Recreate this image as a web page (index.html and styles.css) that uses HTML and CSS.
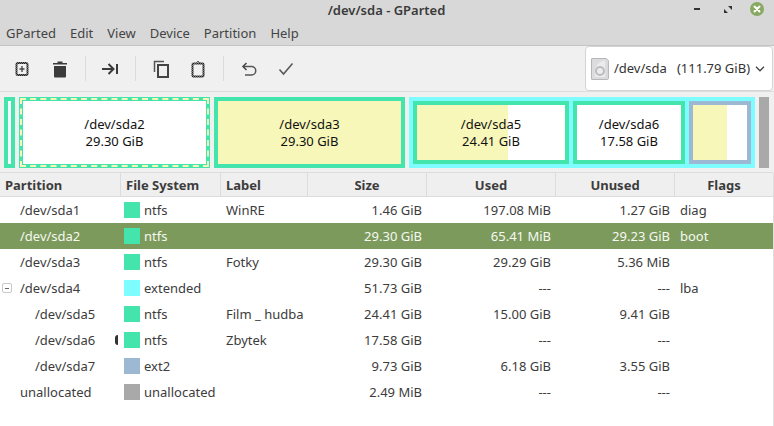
FILE: index.html
```html
<!DOCTYPE html>
<html lang="en">
<head>
<meta charset="utf-8">
<title>/dev/sda - GParted</title>
<link rel="stylesheet" href="styles.css">
</head>
<body>
<svg class="defs" width="0" height="0" aria-hidden="true"><defs>
<pattern id="dither" width="2" height="2" patternUnits="userSpaceOnUse"><rect width="2" height="2" fill="#777"/><rect width="1" height="1" fill="#222"/><rect x="1" y="1" width="1" height="1" fill="#222"/></pattern>
</defs></svg>
<div class="window">
  <header class="titlebar">
    <span class="title">/dev/sda - GParted</span>
    <div class="controls">
      <svg width="100" height="18" viewBox="0 0 100 18"><rect x="29" y="8" width="6" height="2" fill="#333"/><path d="M63 6h4v4zM59 9l4 4h-4z" fill="#333"/><circle cx="92" cy="9" r="7" fill="#88a961"/><path d="M89.500 6.500l5 5M94.500 6.500l-5 5" stroke="#fff" stroke-width="2" stroke-linecap="round"/></svg>
    </div>
  </header>
  <nav class="menubar"><span>GParted</span><span>Edit</span><span>View</span><span>Device</span><span>Partition</span><span>Help</span></nav>
  <div class="toolbar">
    <span class="tool"><svg width="16" height="16" viewBox="0 0 16 16"><rect x="2.500" y="2" width="11" height="12" rx="1.500" fill="none" stroke="url(#dither)" stroke-width="2"/><path d="M8 5v6M5.500 8h5" stroke="#444" stroke-width="1.300"/></svg></span>
    <span class="tool"><svg width="16" height="18" viewBox="0 0 16 18"><path d="M1 3h4.500V1.500h5V3H15v1.500H1zM2 6h12v10.500a1 1 0 0 1-1 1H3a1 1 0 0 1-1-1z" fill="#3b3b3b"/></svg></span>
    <span class="sep"></span>
    <span class="tool"><svg width="18" height="14" viewBox="0 0 18 14"><path d="M1 7h11M7.500 2l5 5-5 5" fill="none" stroke="#3b3b3b" stroke-width="2"/><rect x="15" y="2" width="2" height="10" fill="#3b3b3b"/></svg></span>
    <span class="sep"></span>
    <span class="tool"><svg width="16" height="18" viewBox="0 0 16 18"><path d="M1.500 12V1.500H11" fill="none" stroke="#555" stroke-width="1.500"/><rect x="5" y="5" width="10" height="12" fill="none" stroke="#444" stroke-width="2"/></svg></span>
    <span class="tool"><svg width="16" height="18" viewBox="0 0 16 18"><path d="M3.500 3.500h9a1 1 0 0 1 1 1v11a1 1 0 0 1-1 1h-9a1 1 0 0 1-1-1v-11a1 1 0 0 1 1-1z" fill="none" stroke="url(#dither)" stroke-width="2"/><path d="M5.500 3.500L8 1l2.500 2.500" fill="none" stroke="#666" stroke-width="1"/></svg></span>
    <span class="sep"></span>
    <span class="tool"><svg width="16" height="15" viewBox="0 0 16 15"><path d="M2 4.500h8.500a3.700 3.700 0 0 1 0 8.500H4" fill="none" stroke="#555" stroke-width="1.500"/><path d="M5.500 1L2 4.500 5.500 8" fill="none" stroke="#444" stroke-width="1.500"/></svg></span>
    <span class="tool"><svg width="16" height="14" viewBox="0 0 16 14"><path d="M1.500 7.500L5.500 12 14.500 1.500" fill="none" stroke="#555" stroke-width="1.500"/></svg></span>
    <div class="combo">
      <svg width="18" height="22" viewBox="0 0 18 22"><path d="M1 .5h14.500l2 2v18a1 1 0 0 1-1 1H1a.5.500 0 0 1-.5-.5V1a.5.500 0 0 1 .5-.5z" fill="#dcdcde" stroke="#b4b4b8"/><path d="M14 2.500c-5 1-9 4-10 9.500v7h10z" fill="#ececee"/><circle cx="9" cy="13" r="4" fill="none" stroke="#bcbcc0" stroke-width="2"/></svg>
      <span class="combo-text">/dev/sda&nbsp;&nbsp; (111.79 GiB)</span>
      <svg width="10" height="6" viewBox="0 0 10 6"><path d="M1 .8l4 4 4-4" fill="none" stroke="#444" stroke-width="1.300"/></svg>
    </div>
  </div>
  <div class="map">
    <div class="part ntfs w-sda1"></div>
    <div class="part ntfs dashed w-sda2"><div class="inner">/dev/sda2<br>29.30 GiB</div></div>
    <div class="part ntfs w-sda3"><div class="inner full">/dev/sda3<br>29.30 GiB</div></div>
    <div class="extended">
      <div class="part ntfs w-sda5"><div class="inner used-bar u5">/dev/sda5<br>24.41 GiB</div></div>
      <div class="part ntfs w-sda6"><div class="inner">/dev/sda6<br>17.58 GiB</div></div>
      <div class="part ext2 w-sda7"><div class="inner used-bar u7"></div></div>
    </div>
    <div class="unalloc"></div>
  </div>
  <div class="table">
    <div class="row head"><span>Partition</span><span>File System</span><span>Label</span><span class="c">Size</span><span class="c">Used</span><span class="c">Unused</span><span class="c">Flags</span></div>
    <div class="row"><span class="name">/dev/sda1</span><span class="fs"><i class="sw g"></i>ntfs</span><span>WinRE</span><span class="r">1.46 GiB</span><span class="r">197.08 MiB</span><span class="r">1.27 GiB</span><span>diag</span></div>
    <div class="row sel"><span class="name">/dev/sda2</span><span class="fs"><i class="sw g"></i>ntfs</span><span></span><span class="r">29.30 GiB</span><span class="r">65.41 MiB</span><span class="r">29.23 GiB</span><span>boot</span></div>
    <div class="row"><span class="name">/dev/sda3</span><span class="fs"><i class="sw g"></i>ntfs</span><span>Fotky</span><span class="r">29.30 GiB</span><span class="r">29.29 GiB</span><span class="r">5.36 MiB</span><span></span></div>
    <div class="row"><span class="name"><i class="expander"></i>/dev/sda4</span><span class="fs"><i class="sw c1"></i>extended</span><span></span><span class="r">51.73 GiB</span><span class="r">---</span><span class="r">---</span><span>lba</span></div>
    <div class="row"><span class="name sub">/dev/sda5</span><span class="fs"><i class="sw g"></i>ntfs</span><span>Film _ hudba</span><span class="r">24.41 GiB</span><span class="r">15.00 GiB</span><span class="r">9.41 GiB</span><span></span></div>
    <div class="row"><span class="name sub">/dev/sda6<i class="busy"></i></span><span class="fs"><i class="sw g"></i>ntfs</span><span>Zbytek</span><span class="r">17.58 GiB</span><span class="r">---</span><span class="r">---</span><span></span></div>
    <div class="row"><span class="name sub">/dev/sda7</span><span class="fs"><i class="sw b"></i>ext2</span><span></span><span class="r">9.73 GiB</span><span class="r">6.18 GiB</span><span class="r">3.55 GiB</span><span></span></div>
    <div class="row"><span class="name">unallocated</span><span class="fs"><i class="sw gr"></i>unallocated</span><span></span><span class="r">2.49 MiB</span><span class="r">---</span><span class="r">---</span><span></span></div>
  </div>
</div>
</body>
</html>
```
FILE: styles.css
```css
* { box-sizing: border-box; }
html, body { margin: 0; height: 100%; overflow: hidden; }
body { font: 13px/17px "Noto Sans", sans-serif; color: #3c3c3c; background: #f0f0f0; }
.defs { position: absolute; }
.window { height: 426px; display: flex; flex-direction: column; }

.titlebar { height: 21px; background: #d8d8d8; display: flex; justify-content: center; align-items: center; position: relative; padding-right: 1px; }
.title { font-weight: 600; color: #3a3a3a; }
.controls { position: absolute; right: 9px; top: 0; height: 18px; }
.controls svg { display: block; }

.menubar { height: 25px; background: #d8d8d8; border-bottom: 1px solid #c4c4c4; display: flex; padding: 1px 0 0 6px; align-items: center; color: #444; }
.menubar span { margin-right: 14px; }

.toolbar { height: 46px; display: flex; align-items: center; padding-left: 3.500px; background: #f0f0f0; border-bottom: 1px solid #dcdcdc; }
.tool { width: 37.500px; display: flex; justify-content: center; padding-top: 1px; }
.tool svg { display: block; }
.sep { width: 1px; height: 25px; background: #dcdcdc; margin: 0 6px; }
.combo { margin: 0 1px 0 auto; width: 188px; height: 45px; background: #fff; border: 1px solid #d4d4d4; border-radius: 4px; display: flex; align-items: center; padding: 0 7px 0 5px; gap: 5px; align-self: flex-start; }
.combo-text { flex: 1; white-space: nowrap; color: #333; }

.map { height: 81px; padding: 5px 5px 5px 4px; display: flex; gap: 4px; background: #f0f0f0; border-bottom: 0; }
.part { border: 4px solid #43e5ac; height: 100%; flex: none; background: #fff; display: flex; position: relative; }
.part.ext2 { border-color: #9db8d2; }
.inner { flex: 1; display: flex; align-items: center; justify-content: center; text-align: center; color: #111; background: #fff; }
.inner.full { background: #f7f7b9; }
.used-bar.u5 { background: linear-gradient(90deg, #f7f7b9 91px, #fff 91px); }
.used-bar.u7 { background: linear-gradient(90deg, #f7f7b9 34px, #fff 34px); }
.dashed::after { content: ""; position: absolute; inset: -3px; border: 2px dashed #f7f7b9; pointer-events: none; }
.w-sda1 { width: 11px; }
.w-sda2 { width: 191px; }
.w-sda3 { width: 191px; }
.extended { width: 346px; flex: none; height: 100%; border: 4px solid #7dfdff; background: #7dfdff; display: flex; gap: 4px; }
.w-sda5 { width: 156px; }
.w-sda6 { width: 112px; }
.w-sda7 { width: 62px; }
.unalloc { width: 10px; flex: none; background: #a9a9a9; }

.table { flex: 1; background: #fff; border-right: 1px solid #e0e0e0; }
.row { display: grid; grid-template-columns: 121px 100px 87px 119px 129px 119px 1fr; height: 26px; align-items: center; color: #3c3c3c; white-space: nowrap; }
.row > span { padding: 0 5px; display: flex; align-items: center; }
.row > .r { justify-content: flex-end; }
.row > .c { justify-content: center; }
.head { height: 25px; margin-top: -1px; background: #efefef; border-top: 1px solid #dcdcdc; border-bottom: 1px solid #dcdcdc; font-weight: 700; align-items: stretch; }
.head > span { border-right: 1px solid #dcdcdc; padding-top: 1px; }
.head > span:last-child { border-right: 0; }
.row > .name { padding-left: 20px; position: relative; }
.row > .name.sub { padding-left: 35px; }
.row > .fs { padding-left: 3px; gap: 4px; }
.sel { background: #7c9a5c; color: #f6f8f2; }
.sw { width: 16px; height: 16px; flex: none; display: block; }
.sw.g { background: #43e5ac; }
.sw.c1 { background: #7dfdff; }
.sw.b { background: #9db8d2; }
.sw.gr { background: #a9a9a9; }
.expander { position: absolute; left: 2px; top: 50%; margin-top: -5px; width: 10px; height: 10px; border: 1px solid #c8c8c8; border-radius: 2px; background: linear-gradient(#666, #666) center / 4px 1px no-repeat; }
.busy { position: absolute; left: 115px; top: 50%; margin-top: -5px; width: 3px; height: 10px; background: #333; border-radius: 3px 0 0 3px; }
```
